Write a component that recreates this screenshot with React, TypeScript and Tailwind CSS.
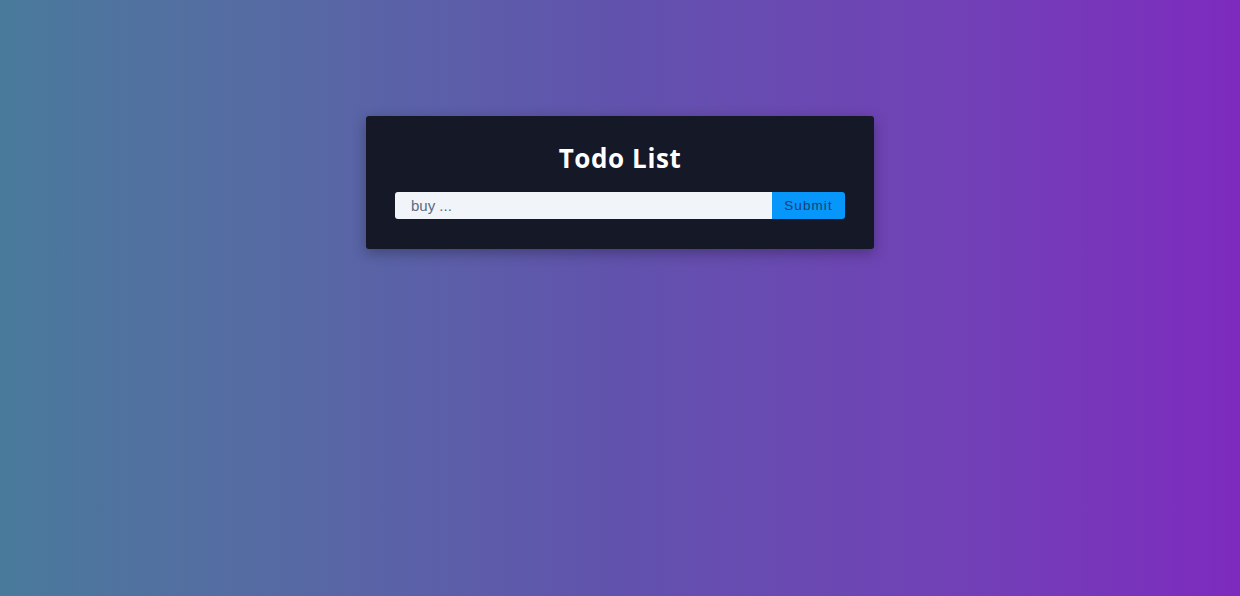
import { useState } from 'react';

export default function App() {
  const [todo, setTodo] = useState('');

  return (
    <div className="h-[596px] w-full bg-gradient-to-r from-[#497a9b] via-[#6152ad] to-[#7d2abe] flex justify-center items-start pt-[116px]">
      {/* Card */}
      <div className="w-[508px] bg-[#151827] rounded-[3px] shadow-[0_4px_14px_rgba(0,0,0,0.3)] pt-[26px] pb-[30px] px-[29px]">
        <h1 className="text-center text-white text-[26px] leading-[32px] tracking-[0.6px] font-bold mb-[18px] font-['Open_Sans','Noto_Sans',sans-serif]">
          Todo List
        </h1>
        <form className="flex h-[27px]" onSubmit={(e) => e.preventDefault()}>
          <input
            value={todo}
            onChange={(e) => setTodo(e.target.value)}
            placeholder="buy ..."
            className="flex-1 bg-[#f1f5f9] rounded-l-[3px] pl-4 pt-[2px] text-[15px] text-[#475569] placeholder:text-[#5b6b82] outline-none font-['Liberation_Sans',Arial,sans-serif]"
          />
          <button
            type="submit"
            className="w-[73px] bg-[#0797fb] rounded-r-[3px] pt-[2px] text-[13.5px] tracking-[1.1px] text-[#1b3d72] font-['Liberation_Sans',Arial,sans-serif]"
          >
            Submit
          </button>
        </form>
      </div>
    </div>
  );
}
